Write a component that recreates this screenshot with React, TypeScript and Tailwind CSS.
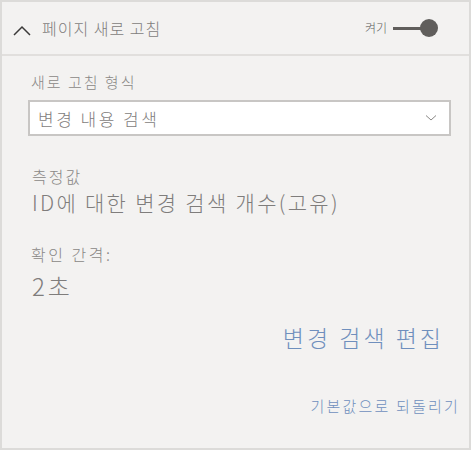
import React from "react";

const font = { fontFamily: '"Noto Sans CJK KR", "Noto Sans", sans-serif' };

export default function App() {
  return (
    <div
      className="w-[471px] h-[450px] bg-[#f3f2f1] border-2 border-[#dcdbd9] flex flex-col font-light"
      style={font}
    >
      <div className="h-[54px] border-b-2 border-[#e1dfdd] flex items-center pl-[10px] pr-[31px]">
        <svg width="20" height="12" viewBox="0 0 20 12" className="mt-[4px]">
          <path d="M2 11 L10 3 L18 11" fill="none" stroke="#3b3a39" strokeWidth="1.5" />
        </svg>
        <span className="ml-[10px] text-[16px] leading-none text-[#7f7d7c] tracking-[1px]">
          페이지 새로 고침
        </span>
        <div className="ml-auto flex items-center">
          <span className="text-[12px] leading-none text-[#605e5c] mr-[6px]">켜기</span>
          <div className="relative w-[45px] h-[20px] flex items-center">
            <div className="w-[34px] h-[3px] bg-[#605e5c]" />
            <div className="absolute right-0 top-[1px] w-[18px] h-[18px] rounded-full bg-[#605e5c]" />
          </div>
        </div>
      </div>
      <div className="flex-1 flex flex-col pl-[26px] pr-[18px]">
        <div className="mt-[16px] pl-[3px] text-[15px] leading-[20px] text-[#8a8886] tracking-[2px]">
          새로 고침 형식
        </div>
        <div className="mt-[8px] h-[36px] bg-white border-2 border-[#c8c6c4] flex items-center pl-[8px] pr-[12px]">
          <span className="text-[17px] leading-none text-[#7f7d7c] tracking-[2.5px]">변경 내용 검색</span>
          <svg width="12" height="8" viewBox="0 0 12 8" className="ml-auto">
            <path d="M1 1.5 L6 6 L11 1.5" fill="none" stroke="#8a8886" strokeWidth="1" />
          </svg>
        </div>
        <div className="mt-[30px] pl-[4px] text-[16px] leading-[20px] text-[#8a8886] tracking-[2px]">측정값</div>
        <div className="mt-[3px] pl-[4px] text-[21px] leading-[26px] text-[#7f7d7c] tracking-[2.3px]">
          ID에 대한 변경 검색 개수(고유)
        </div>
        <div className="mt-[29px] pl-[3px] text-[16px] leading-[20px] text-[#8a8886] tracking-[2.5px]">
          확인 간격:
        </div>
        <div className="mt-[8px] pl-[4px] text-[24px] leading-[28px] text-[#7f7d7c] tracking-[3px]">2초</div>
        <div className="mt-[22px] flex justify-end pr-[7px]">
          <span className="text-[23px] leading-[30px] text-[#6f8fbd] tracking-[3px]">변경 검색 편집</span>
        </div>
        <div className="mt-[44px] flex justify-end mr-[-9px]">
          <span className="text-[15px] leading-[20px] text-[#6f8fbd] tracking-[2.2px]">기본값으로 되돌리기</span>
        </div>
      </div>
    </div>
  );
}
